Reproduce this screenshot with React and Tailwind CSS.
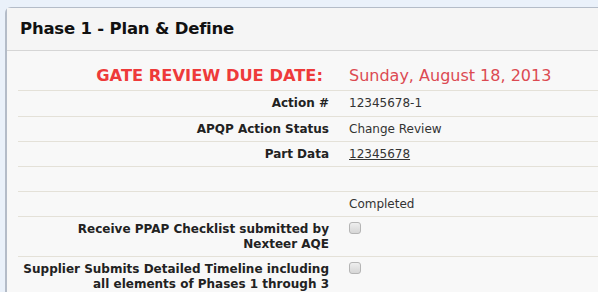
import React from "react";

const rows = [
  { label: ["Action #"], value: "12345678-1" },
  { label: ["APQP Action Status"], value: "Change Review" },
  { label: ["Part Data"], value: "12345678", link: true },
  { label: [], value: "" },
  { label: [], value: "Completed" },
  { label: ["Receive PPAP Checklist submitted by", "Nexteer AQE"], check: true },
  { label: ["Supplier Submits Detailed Timeline including", "all elements of Phases 1 through 3"], check: true },
];

function Checkbox() {
  return (
    <span className="inline-block h-[12px] w-[12px] rounded-[3px] border border-[#b5b5b5] bg-gradient-to-b from-[#eeeeee] to-[#d6d6d6]" />
  );
}

export default function App() {
  return (
    <div
      className="h-[292px] w-[598px] overflow-hidden bg-[#eaf1fa] pl-[5px] pt-[7px] text-[#222]"
      style={{ fontFamily: '"DejaVu Sans", Verdana, sans-serif' }}
    >
      <div className="w-[640px] rounded-tl-[6px] border-l-2 border-t border-[#b4bcc8] bg-[#f8f8f8]">
        {/* Header */}
        <div className="flex h-[43px] items-center border-b border-[#d6d6d6] bg-[#f5f5f5] pl-[13px]">
          <h2 className="text-[16.5px] font-bold tracking-[-0.2px] text-[#111]">Phase 1 - Plan &amp; Define</h2>
        </div>

        {/* Body */}
        <div className="pl-[11px] pt-[11px]">
          <div className="grid grid-cols-[319px_1fr] border-b border-[#e4e1d8]">
            <div className="pb-[4px] pr-[14px] pt-[4px] text-right text-[16.3px] font-bold leading-[20px] text-[#ee3a3a]">
              GATE REVIEW DUE DATE:
            </div>
            <div className="pb-[4px] pl-[12px] pt-[4px] text-[16px] leading-[20px] text-[#dc4a52]">
              Sunday, August 18, 2013
            </div>
          </div>

          {rows.map((r, i) => (
            <div key={i} className="grid grid-cols-[319px_1fr] border-b border-[#e4e1d8] text-[12px] leading-[15px]">
              <div className={`whitespace-nowrap pr-[8px] pt-[5px] text-right font-bold text-[#222] ${i === 0 ? "pb-[5px]" : "pb-[4px]"}`}>
                {r.label.length === 0 ? "\u00a0" : r.label.map((l, j) => <div key={j}>{l}</div>)}
              </div>
              <div className="pb-[4px] pl-[12px] pt-[5px] text-[#333]">
                {r.check ? <Checkbox /> : r.link ? <a className="underline">{r.value}</a> : r.value || "\u00a0"}
              </div>
            </div>
          ))}
        </div>
      </div>
    </div>
  );
}
